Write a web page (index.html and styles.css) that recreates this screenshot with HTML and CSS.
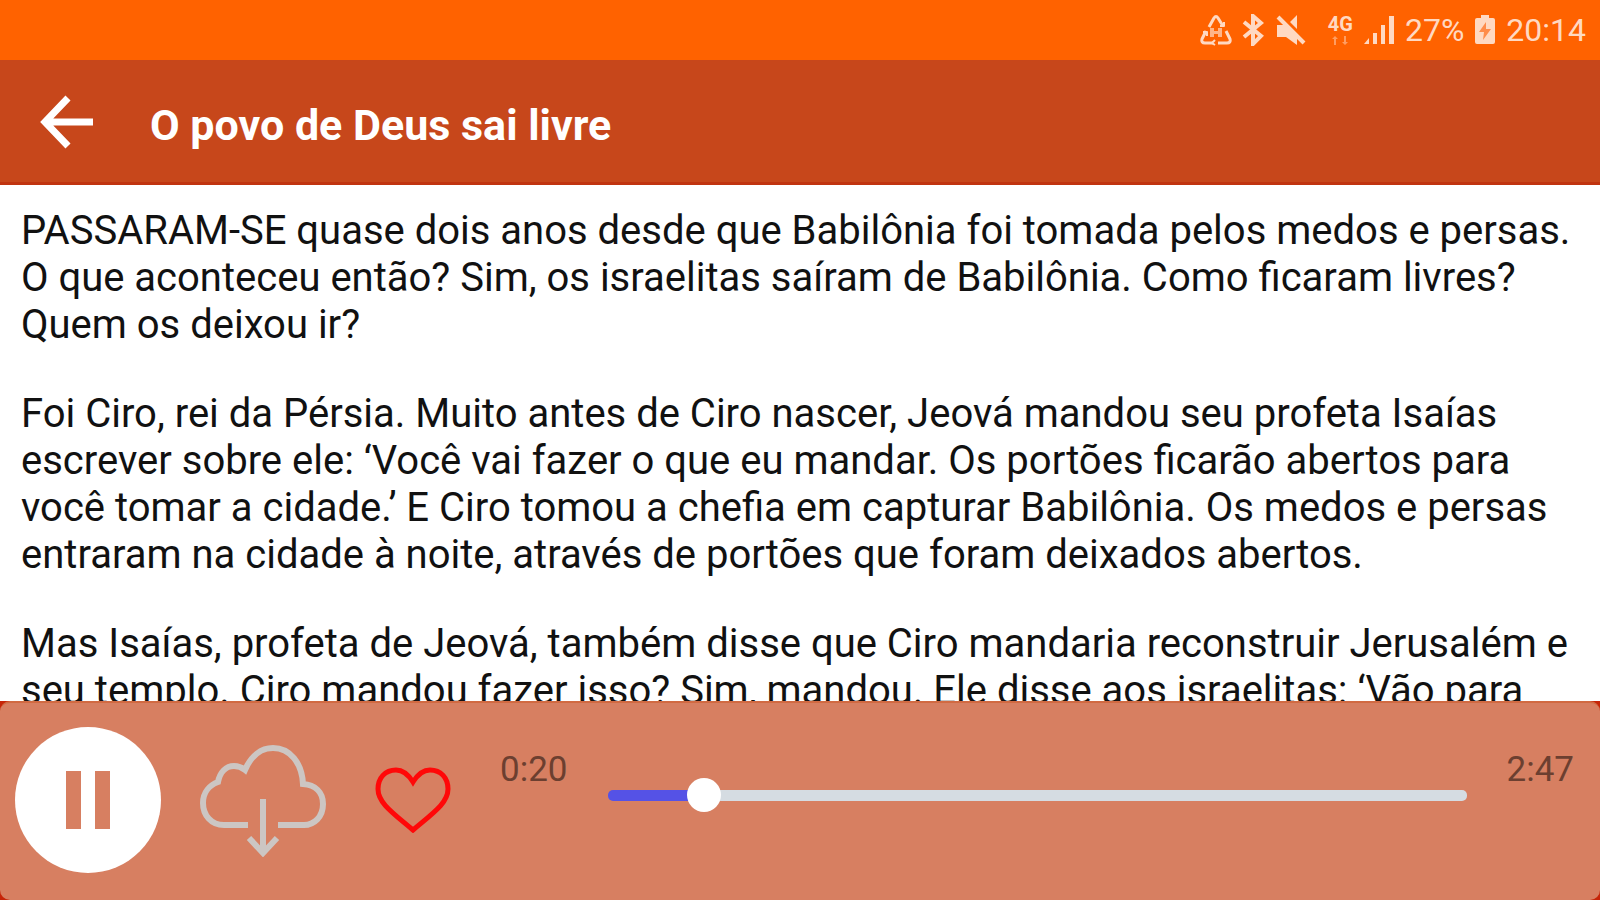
FILE: index.html
```html
<!DOCTYPE html>
<html lang="pt">
<head>
<meta charset="utf-8">
<meta name="viewport" content="width=device-width, initial-scale=1">
<title>O povo de Deus sai livre</title>
<link rel="stylesheet" href="styles.css">
</head>
<body>
<div class="status">
  <svg class="status-recycle" width="32" height="32" viewBox="0 0 32 32" aria-hidden="true">
    <g fill="none" stroke="currentColor" stroke-width="3" stroke-linejoin="round">
      <path d="M9 13 14 4Q16 1 18 4L23 12"/>
      <path d="M6 17 2 25Q1 29 5 29H13"/>
      <path d="M18 29H27Q31 29 30 25L26 17"/>
      <path d="M20 12H24V8M15 26l-3 3 3 2M3 18h4v4" stroke-width="2"/>
    </g>
    <path d="M10 14h4v3h4v-3h4v9h-4v-3h-4v3h-4z" fill="currentColor" opacity=".7"/>
  </svg>
  <svg class="status-bluetooth" width="22" height="32" viewBox="0 0 22 32" aria-hidden="true">
    <path d="M2 8 19 22 11 30V2L19 9 2 23" fill="none" stroke="currentColor" stroke-width="4"/>
  </svg>
  <svg class="status-mute" width="30" height="32" viewBox="0 0 30 32" aria-hidden="true">
    <path d="M1 11h7L21 22v9L10 23H1zM14 8l7-7v14z" fill="currentColor"/>
    <path d="M2 3 28 29" stroke="currentColor" stroke-width="4"/>
  </svg>
  <span class="network">
    <span class="network-type">4G</span>
    <svg width="16" height="9" viewBox="0 0 16 9" aria-hidden="true">
      <path d="M3 0 6 3H4v6H2V3H0zM13 9l-3-3h2V0h2v6h2z" fill="currentColor"/>
    </svg>
  </span>
  <svg class="status-signal" width="32" height="32" viewBox="0 0 32 32" aria-hidden="true">
    <path d="M1 30 6 24V30zM10 19h4v11h-4zM18 11h4v19h-4zM26 2h5v28h-5z" fill="currentColor"/>
  </svg>
  <span class="battery-level">27%</span>
  <svg class="status-battery" width="22" height="32" viewBox="0 0 22 32" aria-hidden="true">
    <path d="M7 1h8v3h4q2 0 2 2v22q0 2-2 2H3q-2 0-2-2V6q0-2 2-2h4z" fill="currentColor"/>
    <path d="M12 8 5 18h5l-1 8 8-11h-5z" fill="#ff8c4a"/>
  </svg>
  <time>20:14</time>
</div>
<header class="toolbar">
  <button class="icon-button" type="button" aria-label="Voltar">
    <svg width="54" height="54" viewBox="0 0 54 54" aria-hidden="true">
      <path d="M28 3 5 27 28 51M5 27H53" fill="none" stroke="currentColor" stroke-width="7"/>
    </svg>
  </button>
  <h1 class="title">O povo de Deus sai livre</h1>
</header>
<main class="story">
  <p>PASSARAM-SE quase dois anos desde que Babilônia foi tomada pelos medos e persas. O que aconteceu então? Sim, os israelitas saíram de Babilônia. Como ficaram livres? Quem os deixou ir?</p>
  <p>Foi Ciro, rei da Pérsia. Muito antes de Ciro nascer, Jeová mandou seu profeta Isaías escrever sobre ele: ‘Você vai fazer o que eu mandar. Os portões ficarão abertos para você tomar a cidade.’ E Ciro tomou a chefia em capturar Babilônia. Os medos e persas entraram na cidade à noite, através de portões que foram deixados abertos.</p>
  <p>Mas Isaías, profeta de Jeová, também disse que Ciro mandaria reconstruir Jerusalém e seu templo. Ciro mandou fazer isso? Sim, mandou. Ele disse aos israelitas: ‘Vão para</p>
</main>
<footer class="player-frame">
  <div class="player">
    <button class="icon-button pause" type="button" aria-label="Pausar">
      <svg width="44" height="58" viewBox="0 0 44 58" aria-hidden="true">
        <path d="M0 0h15v58H0zM29 0h15v58H29z" fill="currentColor"/>
      </svg>
    </button>
    <button class="icon-button download" type="button" aria-label="Baixar">
      <svg width="126" height="114" viewBox="0 0 126 114" aria-hidden="true">
        <path d="M48 82H24C11 82 3 72 3 60C3 49 10 42 18 39C20 29 26 23 34 23Q40 23 45 27C51 13 61 5 73 5C90 5 102 20 103 41C115 42 123 49 123 61C123 74 114 82 104 82H78M63 56V111M49 95 63 110 77 95" fill="none" stroke="currentColor" stroke-width="6"/>
      </svg>
    </button>
    <button class="icon-button favorite" type="button" aria-label="Favorito">
      <svg width="76" height="66" viewBox="0 0 76 66" aria-hidden="true">
        <path d="M38 15C33 7 28 3 21 3C10 3 3 11 3 22C3 36 18 46 38 63C58 46 73 36 73 22C73 11 66 3 55 3C48 3 43 7 38 15Z" fill="none" stroke="currentColor" stroke-width="5"/>
      </svg>
    </button>
    <span class="clock">0:20</span>
    <input class="seek" type="range" min="0" max="167" value="16" aria-label="Posição do áudio">
    <span class="clock">2:47</span>
  </div>
</footer>
</body>
</html>
```
FILE: styles.css
```css
* {
  box-sizing: border-box;
}

body {
  margin: 0;
  height: 100vh;
  display: flex;
  flex-direction: column;
  font-family: Roboto, "Liberation Sans", sans-serif;
  background: #fff;
  color: #111;
}

.status {
  flex: none;
  height: 60px;
  display: flex;
  align-items: center;
  justify-content: flex-end;
  gap: 10px;
  padding-right: 14px;
  background: #ff6200;
  color: #ffd9c2;
  font-size: 32px;
  line-height: 60px;
}

.status-mute {
  margin: 0 12px 0 2px;
}

.network {
  display: flex;
  flex-direction: column;
  align-items: center;
  gap: 3px;
}

.network svg {
  opacity: 0.5;
}

.network-type {
  font-size: 20px;
  line-height: 17px;
  font-weight: 700;
}

.toolbar {
  flex: none;
  height: 125px;
  display: flex;
  align-items: center;
  gap: 56px;
  padding: 2px 40px 0;
  background: #c7471b;
  border-bottom: 3px solid #c03410;
  color: #fff;
}

.icon-button {
  flex: none;
  display: flex;
  align-items: center;
  justify-content: center;
  padding: 0;
  border: 0;
  background: none;
  color: inherit;
}

.title {
  margin: 0;
  padding-top: 5px;
  font-size: 43px;
  line-height: 48px;
  font-weight: 700;
}

.story {
  flex: 1;
  min-height: 0;
  overflow: hidden;
  padding: 22px 20px 0 21px;
  font-size: 40px;
  line-height: 47px;
}

.story p {
  margin: 0 0 42px;
}

.player-frame {
  flex: none;
  background: #c62508;
}

.player {
  height: 199px;
  display: flex;
  align-items: center;
  padding: 0 26px 4px 15px;
  border-top: 2px solid #d16a42;
  border-radius: 10px;
  background: #d77f61;
}

.pause {
  width: 146px;
  height: 146px;
  border-radius: 50%;
  background: #fff;
  color: #d77f61;
}

.download {
  margin-left: 39px;
  color: #ccc6c3;
}

.favorite {
  margin: 0 49px;
  color: #ff0808;
}

.clock {
  flex: none;
  align-self: flex-start;
  padding-top: 46px;
  font-size: 35px;
  line-height: 42px;
  color: #6c3f30;
}

.seek {
  flex: 1;
  min-width: 0;
  height: 34px;
  margin: 0 40px 8px;
  appearance: none;
  background: none;
}

.seek::-webkit-slider-runnable-track {
  height: 11px;
  border-radius: 5px;
  background: linear-gradient(to right, #5552e6 11%, #d5dce2 11%);
}

.seek::-webkit-slider-thumb {
  appearance: none;
  width: 34px;
  height: 34px;
  margin-top: -12px;
  border-radius: 50%;
  background: #fff;
}
```
